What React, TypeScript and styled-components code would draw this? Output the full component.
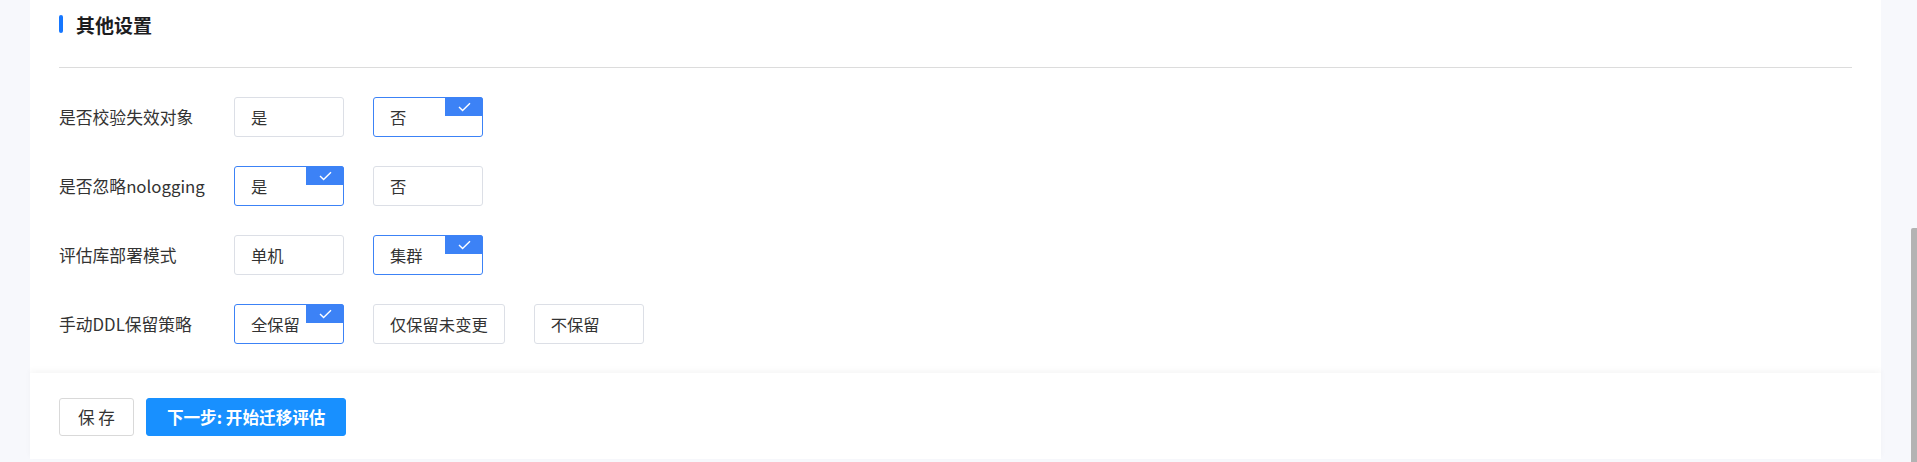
import React, { useState } from 'react';
import styled, { createGlobalStyle } from 'styled-components';

const GlobalStyle = createGlobalStyle`
  html, body {
    margin: 0;
    padding: 0;
    background: #f7f8fc;
    font-family: "Noto Sans CJK SC", "Noto Sans", sans-serif;
    overflow: hidden;
  }
`;

const Page = styled.div`
  display: flex;
  height: 462px;
  background: #f7f8fc;
`;

const Main = styled.div`
  flex: 1;
  display: flex;
  flex-direction: column;
  padding: 0 30px 3px 30px;
`;

const Card = styled.div`
  flex: 1;
  background: #fff;
  padding: 15px 29px 0 29px;
`;

const SectionTitle = styled.div`
  display: flex;
  align-items: center;
  gap: 13px;
  height: 18px;
  font-size: 19px;
  font-weight: 600;
  color: #1d1d1f;
  &::before {
    content: '';
    width: 4px;
    height: 18px;
    border-radius: 2px;
    background: #1677ff;
  }
`;

const Divider = styled.div`
  height: 1px;
  background: #dcdcdc;
  margin: 34px 0 29px 0;
`;

const Form = styled.div`
  display: flex;
  flex-direction: column;
  gap: 29px;
`;

const Row = styled.div`
  display: flex;
  align-items: center;
  height: 40px;
`;

const Label = styled.div`
  width: 175px;
  font-size: 16.8px;
  color: #333;
`;

const Options = styled.div`
  display: flex;
  gap: 29px;
`;

const Option = styled.div<{ $active: boolean }>`
  position: relative;
  box-sizing: border-box;
  min-width: 110px;
  height: 40px;
  padding: 0 16px;
  display: flex;
  align-items: center;
  font-size: 16.3px;
  color: #333;
  background: #fff;
  border: 1px solid ${p => (p.$active ? '#3c82f6' : '#dcdfe6')};
  border-radius: 3px;
  cursor: pointer;
`;

const Badge = styled.span`
  position: absolute;
  top: -1px;
  right: -1px;
  width: 38px;
  height: 19px;
  background: #3c82f6;
  border-top-right-radius: 3px;
  display: flex;
  align-items: center;
  justify-content: center;
`;

const Footer = styled.div`
  display: flex;
  gap: 12px;
  background: #fff;
  padding: 25px 29px 23px 29px;
  box-shadow: 0 -3px 6px rgba(0, 0, 0, 0.035);
  position: relative;
`;

const Button = styled.button<{ $primary?: boolean }>`
  height: 38px;
  padding: 0 ${p => (p.$primary ? 20 : 18)}px;
  font-family: inherit;
  font-size: 16.6px;
  font-weight: ${p => (p.$primary ? 600 : 400)};
  color: ${p => (p.$primary ? '#fff' : '#333')};
  background: ${p => (p.$primary ? '#1890ff' : '#fff')};
  border: 1px solid ${p => (p.$primary ? '#1890ff' : '#d9d9d9')};
  border-radius: 3px;
  cursor: pointer;
`;

const Track = styled.div`
  width: 6px;
  display: flex;
  flex-direction: column;
  background: #f7f8fc;
`;

const Thumb = styled.div`
  margin-top: 228px;
  flex: 1;
  background: #b3b3b3;
  border-top-left-radius: 2px;
`;

const Check = () => (
  <svg width="13" height="10" viewBox="0 0 13 10" fill="none">
    <polyline points="1,5 4.6,8.6 12,1.2" stroke="#fff" strokeWidth="1.4" />
  </svg>
);

const fields = [
  { label: '是否校验失效对象', options: ['是', '否'], value: 1 },
  { label: '是否忽略nologging', options: ['是', '否'], value: 0 },
  { label: '评估库部署模式', options: ['单机', '集群'], value: 1 },
  { label: '手动DDL保留策略', options: ['全保留', '仅保留未变更', '不保留'], value: 0 },
];

export default function App() {
  const [values, setValues] = useState(fields.map(f => f.value));

  return (
    <Page>
      <GlobalStyle />
      <Main>
        <Card>
          <SectionTitle>其他设置</SectionTitle>
          <Divider />
          <Form>
            {fields.map((f, i) => (
              <Row key={f.label}>
                <Label>{f.label}</Label>
                <Options>
                  {f.options.map((o, j) => (
                    <Option
                      key={o}
                      $active={values[i] === j}
                      onClick={() => setValues(v => v.map((x, k) => (k === i ? j : x)))}
                    >
                      {o}
                      {values[i] === j && (
                        <Badge>
                          <Check />
                        </Badge>
                      )}
                    </Option>
                  ))}
                </Options>
              </Row>
            ))}
          </Form>
        </Card>
        <Footer>
          <Button>保 存</Button>
          <Button $primary>下一步: 开始迁移评估</Button>
        </Footer>
      </Main>
      <Track>
        <Thumb />
      </Track>
    </Page>
  );
}
